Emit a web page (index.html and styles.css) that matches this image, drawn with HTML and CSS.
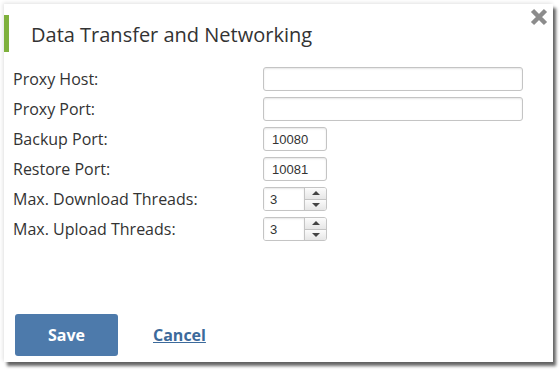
FILE: index.html
```html
<!DOCTYPE html>
<html lang="en">
<head>
    <meta charset="UTF-8">
    <title>Data Transfer and Networking</title>
    <link rel="stylesheet" href="styles.css">
</head>
<body>
    <div class="dialog">
        <button class="close-btn" title="Close">
            <svg width="18" height="18" viewBox="0 0 18 18">
                <path d="M2.5 2.5 L15.5 15.5 M15.5 2.5 L2.5 15.5" stroke="#8c8c8c" stroke-width="4.5"/>
            </svg>
        </button>
        <div class="dialog-title">Data Transfer and Networking</div>

        <div class="form">
            <div class="row">
                <label>Proxy Host:</label>
                <input type="text" class="field wide">
            </div>
            <div class="row">
                <label>Proxy Port:</label>
                <input type="text" class="field wide">
            </div>
            <div class="row">
                <label>Backup Port:</label>
                <input type="text" class="field short" value="10080">
            </div>
            <div class="row">
                <label>Restore Port:</label>
                <input type="text" class="field short" value="10081">
            </div>
            <div class="row">
                <label>Max. Download Threads:</label>
                <div class="spinner">
                    <input type="text" value="3">
                    <div class="spin-btns">
                        <span class="spin up"></span>
                        <span class="spin down"></span>
                    </div>
                </div>
            </div>
            <div class="row">
                <label>Max. Upload Threads:</label>
                <div class="spinner">
                    <input type="text" value="3">
                    <div class="spin-btns">
                        <span class="spin up"></span>
                        <span class="spin down"></span>
                    </div>
                </div>
            </div>
        </div>

        <div class="actions">
            <button class="save-btn">Save</button>
            <a href="#" class="cancel-link">Cancel</a>
        </div>
    </div>
</body>
</html>
```

FILE: styles.css
```css
* {
    margin: 0;
    padding: 0;
    box-sizing: border-box;
}
html, body {
    height: 100%;
}
body {
    font-family: "Open Sans", Arial, sans-serif;
    background: #fff;
    padding: 4px 0 0 4px;
}
.dialog {
    position: relative;
    width: 549px;
    height: 358px;
    background: #fff;
    box-shadow: 3px 4px 3px rgba(0,0,0,0.6), -1px -1px 4px rgba(0,0,0,0.12);
    display: flex;
    flex-direction: column;
}
.close-btn {
    position: absolute;
    top: 4px;
    right: 5px;
    background: none;
    border: none;
    cursor: pointer;
    line-height: 0;
}
.dialog-title {
    margin-top: 11px;
    height: 37px;
    border-left: 5px solid #7fb13d;
    padding-left: 22px;
    font-size: 20px;
    line-height: 39px;
    color: #333;
}
.form {
    margin-top: 15px;
    padding-left: 9px;
    display: flex;
    flex-direction: column;
    gap: 6px;
}
.row {
    display: flex;
    align-items: center;
    height: 24px;
}
.row label {
    width: 250px;
    font-size: 16px;
    color: #333;
}
.field {
    height: 24px;
    border: 1px solid #c4c4c4;
    border-radius: 3px;
    box-shadow: inset 0 1px 2px rgba(0,0,0,0.1);
    font-family: Arial, "Liberation Sans", sans-serif;
    font-size: 13px;
    color: #333;
    padding: 0 8px;
    outline: none;
}
.wide {
    width: 260px;
}
.short {
    width: 64px;
}
.spinner {
    display: flex;
    width: 64px;
    height: 24px;
    border: 1px solid #c4c4c4;
    border-radius: 3px;
    overflow: hidden;
}
.spinner input {
    width: 40px;
    border: none;
    outline: none;
    font-family: Arial, "Liberation Sans", sans-serif;
    font-size: 13px;
    color: #333;
    padding: 0 6px;
    box-shadow: inset 0 1px 2px rgba(0,0,0,0.1);
}
.spin-btns {
    flex: 1;
    display: flex;
    flex-direction: column;
    border-left: 1px solid #c4c4c4;
}
.spin {
    flex: 1;
    position: relative;
    background: linear-gradient(#fbfbfb, #e6e6e6);
}
.spin.up {
    border-bottom: 1px solid #c4c4c4;
}
.spin::after {
    content: "";
    position: absolute;
    left: 50%;
    top: 50%;
    margin-left: -4px;
    border-left: 4px solid transparent;
    border-right: 4px solid transparent;
}
.spin.up::after {
    margin-top: -2px;
    border-bottom: 4px solid #444;
}
.spin.down::after {
    margin-top: -2px;
    border-top: 4px solid #444;
}
.actions {
    margin-top: auto;
    margin-bottom: 6px;
    padding-left: 11px;
    display: flex;
    align-items: center;
    gap: 35px;
}
.save-btn {
    width: 103px;
    height: 42px;
    background: #4d7aab;
    color: #fff;
    border: none;
    border-radius: 3px;
    font-family: "Open Sans", Arial, sans-serif;
    font-weight: bold;
    font-size: 16px;
    cursor: pointer;
}
.cancel-link {
    color: #3c6a9b;
    font-weight: bold;
    font-size: 16px;
    text-decoration: underline;
}
```
